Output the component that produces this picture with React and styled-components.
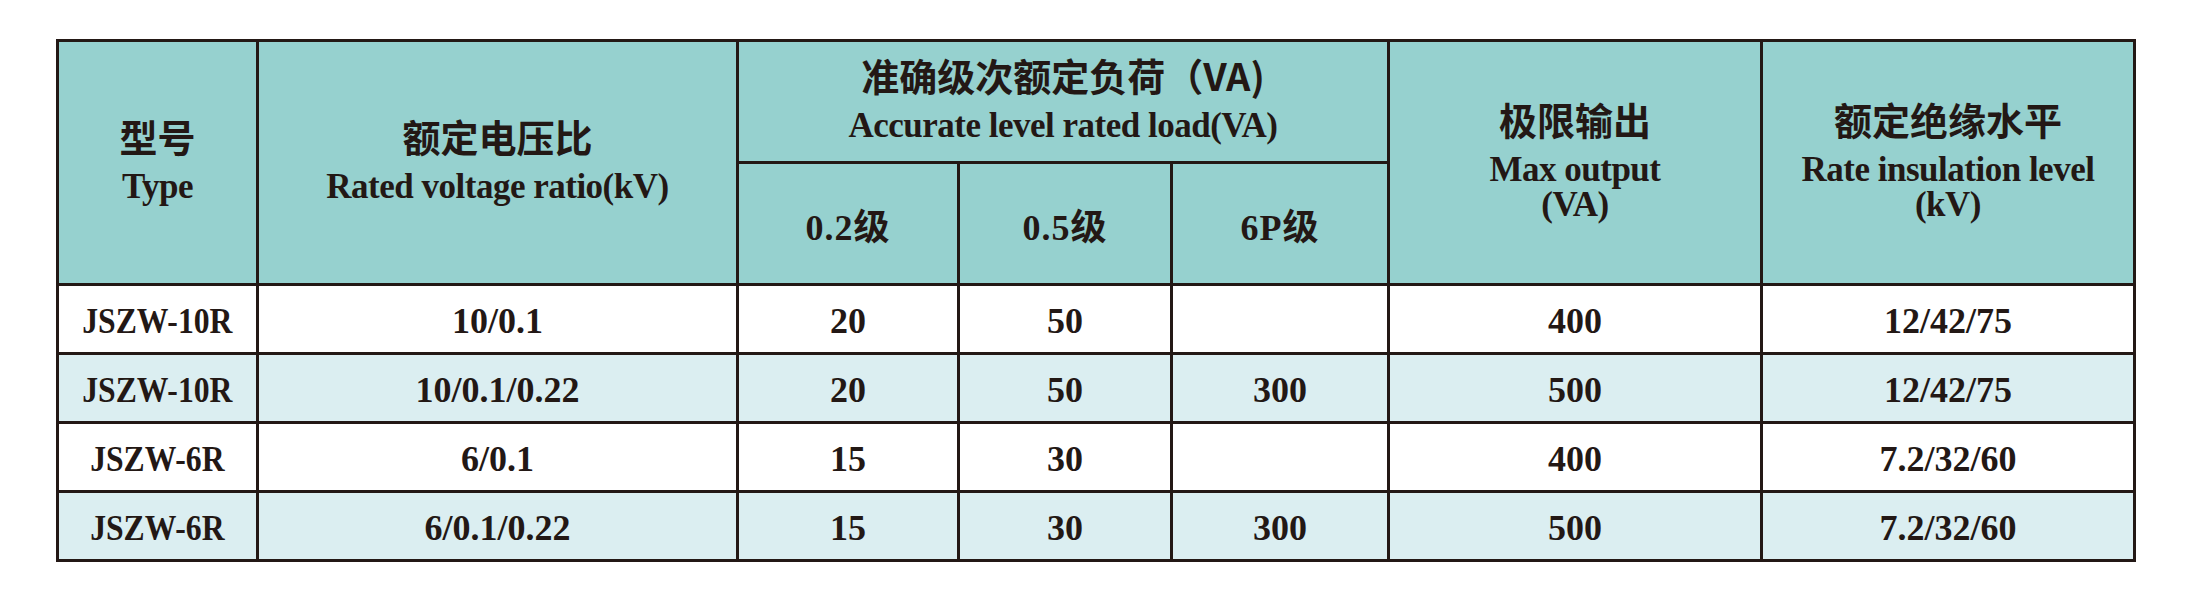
import styled, { createGlobalStyle } from "styled-components";

const GlobalStyle = createGlobalStyle`
  html, body {
    margin: 0;
    padding: 0;
    background: #ffffff;
  }
`;

const Page = styled.div`
  width: 2190px;
  height: 592px;
  padding: 39px 0 0 56px;
  box-sizing: border-box;
  background: #ffffff;
`;

const Table = styled.table`
  border-collapse: collapse;
  table-layout: fixed;
  width: 2077px;
  color: #231815;
  border: 3px solid #231815;
`;

const HeadCell = styled.th`
  background: #96d1cf;
  border: 3px solid #231815;
  height: ${({ $h }) => $h}px;
  padding: 0;
  text-align: center;
  vertical-align: middle;
  font-weight: 700;
`;

const Stack = styled.div`
  padding-bottom: 8px;
`;

const Row = styled.tr`
  background: ${({ $shade }) => ($shade ? "#dbeef1" : "#ffffff")};
`;

const Cell = styled.td`
  border: 3px solid #231815;
  height: 62px;
  padding: 4px 0 0;
  text-align: center;
  vertical-align: middle;
  font-family: "Liberation Serif", "Noto Sans CJK SC", serif;
  font-weight: 700;
  font-size: 36px;
  line-height: 40px;
`;

const Zh = styled.div`
  font-family: "Noto Sans CJK SC", sans-serif;
  font-weight: 700;
  font-size: 38px;
  line-height: 46px;
  margin-bottom: 10px;
`;

const En = styled.div`
  font-family: "Liberation Serif", serif;
  font-weight: 700;
  font-size: 35px;
  line-height: 35px;
  letter-spacing: -0.5px;
`;

const Grade = styled.span`
  font-family: "Liberation Serif", "Noto Sans CJK SC", serif;
  font-weight: 700;
  font-size: 36px;
  letter-spacing: 1px;
`;

const Value = styled.span`
  display: inline-block;
  transform: scaleX(${({ $narrow }) => ($narrow ? 0.88 : 1)});
`;

const widths = [200, 480, 221, 213, 217, 373, 373];

const rows = [
  ["JSZW-10R", "10/0.1", "20", "50", "", "400", "12/42/75"],
  ["JSZW-10R", "10/0.1/0.22", "20", "50", "300", "500", "12/42/75"],
  ["JSZW-6R", "6/0.1", "15", "30", "", "400", "7.2/32/60"],
  ["JSZW-6R", "6/0.1/0.22", "15", "30", "300", "500", "7.2/32/60"],
];

const App = () => {
  return (
    <Page>
      <GlobalStyle />
      <Table>
        <colgroup>
          {widths.map((w, i) => (
            <col key={i} style={{ width: w }} />
          ))}
        </colgroup>
        <thead>
          <tr>
            <HeadCell rowSpan={2} $h={119}>
              <Stack>
                <Zh>型号</Zh>
                <En>Type</En>
              </Stack>
            </HeadCell>
            <HeadCell rowSpan={2}>
              <Stack>
                <Zh>额定电压比</Zh>
                <En>Rated voltage ratio(kV)</En>
              </Stack>
            </HeadCell>
            <HeadCell colSpan={3} $h={119}>
              <Stack>
                <Zh>准确级次额定负荷（VA)</Zh>
                <En>Accurate level rated load(VA)</En>
              </Stack>
            </HeadCell>
            <HeadCell rowSpan={2}>
              <Stack>
                <Zh>极限输出</Zh>
                <En>Max output</En>
                <En>(VA)</En>
              </Stack>
            </HeadCell>
            <HeadCell rowSpan={2}>
              <Stack>
                <Zh>额定绝缘水平</Zh>
                <En>Rate insulation level</En>
                <En>(kV)</En>
              </Stack>
            </HeadCell>
          </tr>
          <tr>
            <HeadCell $h={119}>
              <Grade>0.2级</Grade>
            </HeadCell>
            <HeadCell>
              <Grade>0.5级</Grade>
            </HeadCell>
            <HeadCell>
              <Grade>6P级</Grade>
            </HeadCell>
          </tr>
        </thead>
        <tbody>
          {rows.map((r, i) => (
            <Row key={i} $shade={i % 2 === 1}>
              {r.map((v, j) => (
                <Cell key={j}>
                  <Value $narrow={j === 0}>{v}</Value>
                </Cell>
              ))}
            </Row>
          ))}
        </tbody>
      </Table>
    </Page>
  );
};

export default App;
